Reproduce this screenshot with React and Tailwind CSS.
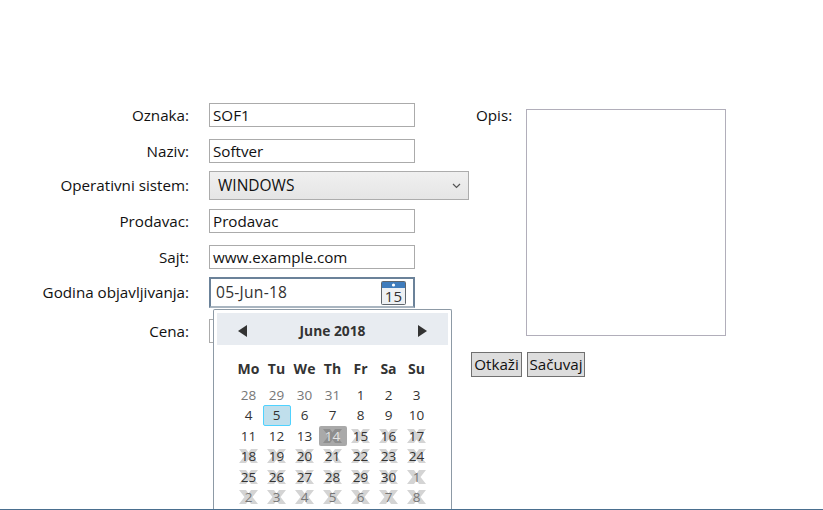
import React from 'react';

const font = { fontFamily: '"Open Sans", "Noto Sans", sans-serif' };

/* ── Calendar day cells ── */
const weeks = [
  [[28, 'o'], [29, 'o'], [30, 'o'], [31, 'o'], [1], [2], [3]],
  [[4], [5, 's'], [6], [7], [8], [9], [10]],
  [[11], [12], [13], [14, 't'], [15, 'x'], [16, 'x'], [17, 'x']],
  [[18, 'x'], [19, 'x'], [20, 'x'], [21, 'x'], [22, 'x'], [23, 'x'], [24, 'x']],
  [[25, 'x'], [26, 'x'], [27, 'x'], [28, 'x'], [29, 'x'], [30, 'x'], [1, 'xo']],
  [[2, 'xo'], [3, 'xo'], [4, 'xo'], [5, 'xo'], [6, 'xo'], [7, 'xo'], [8, 'xo']],
];

const BlackoutX = ({ color }) => (
  <svg className="absolute inset-0 m-auto" width="19" height="14" viewBox="0 0 19 14" aria-hidden="true">
    <path d="M0 0h7l2.5 3.5L12 0h7l-5.5 7 5.5 7h-7l-2.5-3.5L7 14H0l5.5-7z" fill={color} />
  </svg>
);

const Day = ({ n, kind }) => {
  const blackout = kind === 'x' || kind === 'xo' || kind === 't';
  let cls = 'text-[#333333]';
  if (kind === 'o' || kind === 'xo') cls = 'text-[#777777]';
  if (kind === 't') cls = 'text-[#e4e4e4] bg-[#a9a9a9] rounded-[2px]';
  if (kind === 's') cls = 'text-[#333333] bg-[#c0dfec] border border-[#4fd2ff] rounded-[2px]';
  return (
    <div className={`relative w-[28px] h-[20.4px] flex items-center justify-center text-[13.5px] ${cls}`}>
      {blackout && <BlackoutX color={kind === 't' ? '#8e8e8e' : '#d4d4d4'} />}
      <span className="relative">{n}</span>
    </div>
  );
};

const CalendarIcon = () => (
  <svg width="25" height="24" viewBox="0 0 25 24" aria-hidden="true">
    <rect x="0.5" y="0.5" width="24" height="23" rx="1" fill="#eef1f4" stroke="#5f666d" />
    <rect x="1" y="1" width="23" height="6" fill="#3f7cbc" />
    <circle cx="12.5" cy="4" r="1.6" fill="#ffffff" />
    <text x="12.5" y="20.5" textAnchor="middle" fontSize="15" fill="#333333" fontFamily="Open Sans">15</text>
  </svg>
);

const Calendar = () => (
  <div className="absolute left-[213px] top-[309px] w-[239px] h-[201px] bg-white border border-[#8d9aa6] border-b-0 rounded-t-[2px] pt-[3px] px-[3px] overflow-hidden">
    <div className="h-[32px] pt-[4px] bg-[#e8ecf1] flex items-center justify-between px-[21px]">
      <svg width="9" height="12" viewBox="0 0 9 12" aria-hidden="true"><path d="M9 0v12L0 6z" fill="#333333" /></svg>
      <span className="text-[13.8px] font-bold text-[#333333]">June 2018</span>
      <svg width="9" height="12" viewBox="0 0 9 12" aria-hidden="true"><path d="M0 0v12l9-6z" fill="#333333" /></svg>
    </div>
    <div className="flex flex-col items-center">
      <div className="flex mt-[13px] mb-[7px]">
        {['Mo', 'Tu', 'We', 'Th', 'Fr', 'Sa', 'Su'].map((d) => (
          <div key={d} className="w-[28px] h-[20px] flex items-center justify-center text-[14px] font-bold text-[#333333]">{d}</div>
        ))}
      </div>
      {weeks.map((w, i) => (
        <div key={i} className="flex">
          {w.map(([n, kind], j) => <Day key={j} n={n} kind={kind} />)}
        </div>
      ))}
    </div>
  </div>
);

const Label = ({ children }) => (
  <div className="w-[189px] text-right text-[15.2px] text-[#111111] shrink-0">{children}</div>
);

const Row = ({ label, value, mt }) => (
  <div className={`flex items-center gap-[20px] ${mt}`}>
    <Label>{label}</Label>
    <div className="w-[206px] h-[24px] border border-[#ababab] bg-white pl-[3px] flex items-center text-[15.2px] text-[#111111]">{value}</div>
  </div>
);

export default function App() {
  return (
    <div className="relative w-[823px] h-[510px] bg-white overflow-hidden border-b border-[#4a6f8f]" style={font}>
      <div className="flex pt-[103px]">
        <div className="w-[471px] shrink-0">
          <Row label="Oznaka:" value="SOF1" />
          <Row label="Naziv:" value="Softver" mt="mt-[12px]" />
          <div className="flex items-center gap-[20px] mt-[8px]">
            <Label>Operativni sistem:</Label>
            <div className="w-[260px] h-[29px] border border-[#acacac] bg-gradient-to-b from-[#f0f0f0] to-[#e5e5e5] pl-[8px] pr-[7px] flex items-center justify-between text-[15.5px] text-[#111111]">
              <span>WINDOWS</span>
              <svg width="9" height="6" viewBox="0 0 9 6" aria-hidden="true"><path d="M1 1l3.5 3.5L8 1" fill="none" stroke="#555555" strokeWidth="1.2" /></svg>
            </div>
          </div>
          <Row label="Prodavac:" value="Prodavac" mt="mt-[9px]" />
          <Row label="Sajt:" value="www.example.com" mt="mt-[12px]" />
          <div className="flex items-center gap-[20px] mt-[8px]">
            <Label>Godina objavljivanja:</Label>
            <div className="w-[206px] h-[31px] border-2 border-[#6b8299] border-b-[#a9b5c0] bg-white pl-[5px] pr-[7px] flex items-center justify-between text-[15.6px] tracking-[0.25px] text-[#333333]">
              <span>05-Jun-18</span>
              <CalendarIcon />
            </div>
          </div>
          <Row label="Cena:" value="" mt="mt-[11px]" />
        </div>
        <div>
          <div className="flex mt-[1px] ml-[5px]">
            <div className="w-[50px] text-[15.2px] text-[#111111]">Opis:</div>
            <div className="w-[200px] h-[227px] mt-[5px] border border-[#b1aeba] bg-white" />
          </div>
          <div className="flex gap-[5px] mt-[16px]">
            <div className="w-[51px] h-[25px] border border-[#707070] bg-[#dddddd] flex items-center justify-center text-[15.2px] text-[#111111]">Otkaži</div>
            <div className="w-[58px] h-[25px] border border-[#707070] bg-[#dddddd] flex items-center justify-center text-[15.2px] text-[#111111]">Sačuvaj</div>
          </div>
        </div>
      </div>
      <Calendar />
    </div>
  );
}
